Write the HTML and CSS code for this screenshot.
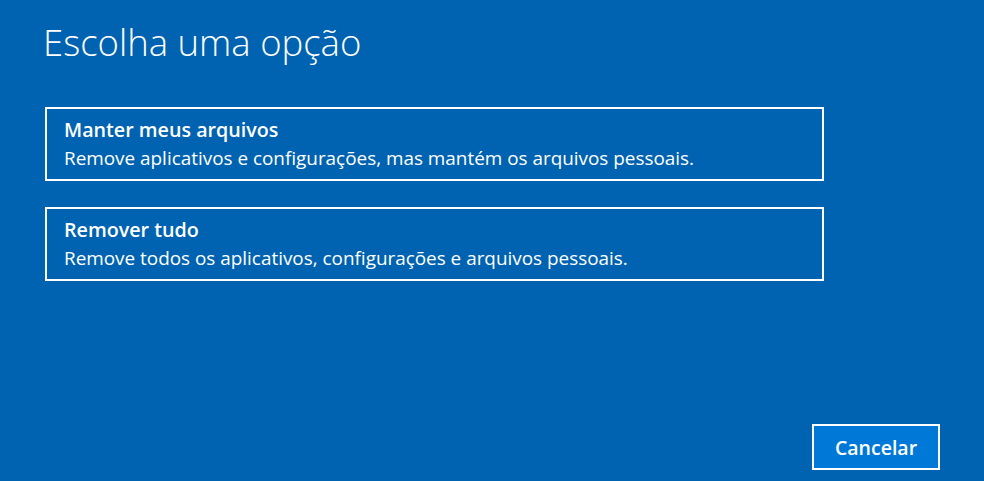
FILE: index.html
```html
<!DOCTYPE html>
<html lang="pt">
<head>
<meta charset="utf-8">
<link rel="stylesheet" href="styles.css">
</head>
<body>
<div class="screen">
  <h1 class="title">Escolha uma opção</h1>
  <div class="options">
    <div class="option">
      <div class="opt-title">Manter meus arquivos</div>
      <div class="opt-desc">Remove aplicativos e configurações, mas mantém os arquivos pessoais.</div>
    </div>
    <div class="option">
      <div class="opt-title">Remover tudo</div>
      <div class="opt-desc">Remove todos os aplicativos, configurações e arquivos pessoais.</div>
    </div>
  </div>
  <div class="footer">
    <button class="btn">Cancelar</button>
  </div>
</div>
</body>
</html>
```
FILE: styles.css
```css
html, body {
  margin: 0;
  padding: 0;
  height: 100%;
  background: #0063b1;
}
.screen {
  box-sizing: border-box;
  height: 100%;
  padding: 0 44px 11px 45px;
  display: flex;
  flex-direction: column;
  font-family: "Open Sans", "Noto Sans", sans-serif;
  color: #fff;
}
.title {
  margin: 19px 0 0 -2px;
  font-weight: 300;
  font-size: 36.5px;
  line-height: 46px;
}
.options {
  margin-top: 42px;
  display: flex;
  flex-direction: column;
  gap: 26px;
  width: 779px;
}
.option {
  box-sizing: border-box;
  border: 2px solid #fff;
  height: 74px;
  padding: 9px 17px 0;
}
.opt-title {
  font-weight: 600;
  font-size: 19.7px;
  line-height: 24px;
}
.opt-desc {
  font-size: 18.9px;
  line-height: 24px;
  margin-top: 4px;
}
.footer {
  margin-top: auto;
  display: flex;
  justify-content: flex-end;
}
.btn {
  box-sizing: border-box;
  width: 128px;
  height: 46px;
  background: #0078d7;
  border: 2px solid #fff;
  color: #fff;
  font-family: "Open Sans", "Noto Sans", sans-serif;
  font-weight: 600;
  font-size: 19.5px;
  padding: 0;
}
```
